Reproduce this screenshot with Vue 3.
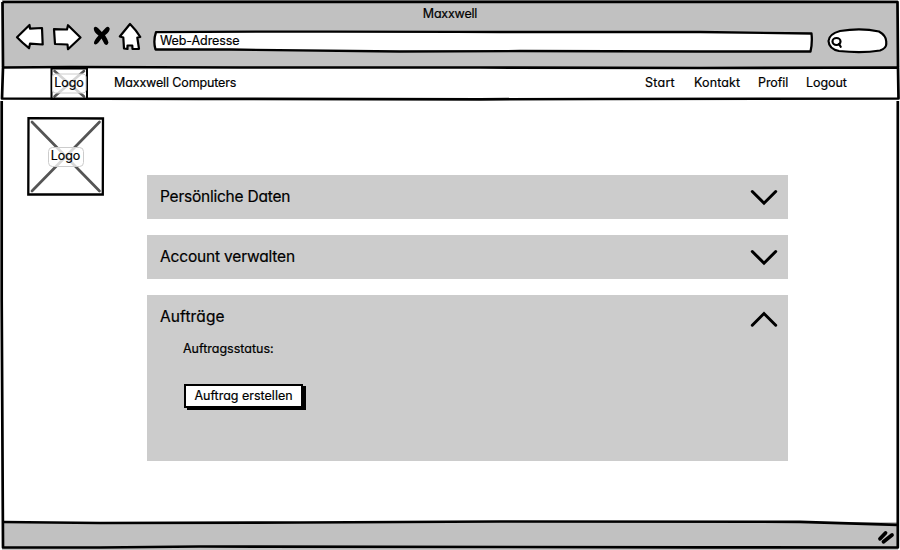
<script setup>
import { ref } from 'vue'

const links = [
  { label: 'Start', cls: 'start' },
  { label: 'Kontakt', cls: 'kontakt' },
  { label: 'Profil', cls: 'profil' },
  { label: 'Logout', cls: 'logout' },
]
const sections = ref([
  { title: 'Persönliche Daten', cls: 'personal', open: false },
  { title: 'Account verwalten', cls: 'account', open: false },
  { title: 'Aufträge', cls: 'orders', open: true },
])
</script>

<template>
  <div class="window">
    <header class="chrome">
      <div class="window-title"><span>Maxxwell</span></div>
      <div class="toolbar">
        <svg class="controls" width="130" height="32" viewBox="14 21 130 32">
          <g fill="#fff" stroke="#000" stroke-width="2.2" stroke-linejoin="round" stroke-linecap="round">
            <path d="M17 37.2L29.5 25L30 28.7L42 28L42.7 44.5L30 43.7L29 48.2Q22 42.500 17 37.200Z" />
            <path d="M54 29.200L67 29.500L68 25.200L80.500 37.500L68 49.200L67.500 44.500L55 44Z" />
            <path d="M130 24L119.800 36.500L123.300 37.500L124 48.500L127.500 49L127.500 45.500L132.300 45.500L132.500 49L139 48.800L137.300 37.500L140.300 37Q136 30 130 24Z" />
          </g>
          <path d="M93.800 28Q95.500 25.500 98.500 28.500L101.800 32L105.500 28Q108.500 25.500 109.700 28.500Q110 31.500 105 35.300Q107.500 39 108.500 42.500Q107.500 46.500 104.500 44L101.500 38.500L98.500 42.500Q95.500 46 94 43.500Q93.500 41 98.500 35.500Q93.500 32 93.800 28Z" />
        </svg>
        <div class="address">
          <svg width="660" height="24" viewBox="153 29 660 24">
            <path d="M156 32.200Q300 31 500 32L700 32L811.500 33.500Q812.500 43 810.500 51.500L700 51.500L520 51L400 51.500L230 49.500L155.500 49.500Q153 41 156 32.200Z" fill="#fff" stroke="#000" stroke-width="2.300" stroke-linejoin="round" />
          </svg>
          <span>Web-Adresse</span>
        </div>
        <svg class="search" width="62" height="28" viewBox="826 27 62 28">
          <path d="M840 31Q861 27.500 879 31.500Q887 36 886.200 43Q887 48 880 50.500Q862 53.500 839 51Q829 49 828.500 41Q829 34 840 31Z" fill="#fff" stroke="#000" stroke-width="2.200" />
          <ellipse cx="836.500" cy="41.500" rx="4" ry="3.500" fill="none" stroke="#000" stroke-width="2.200" />
          <path d="M839 44L840.700 46.800" stroke="#000" stroke-width="2.200" stroke-linecap="round" />
        </svg>
      </div>
    </header>

    <nav class="navbar">
      <div class="logo logo-small">
        <svg width="38" height="34" viewBox="50 67 38 34">
          <path d="M51.500 68.500H87V99H51.500Z" fill="#fff" stroke="#000" stroke-width="2" />
          <path d="M54.500 71L84 96.500M84 71L54.500 96.500" stroke="#555" stroke-width="2.600" stroke-linecap="round" />
          <rect x="52.500" y="74" width="33.500" height="19" rx="3" fill="#fff" fill-opacity=".75" stroke="#ccc" />
        </svg>
        <span>Logo</span>
      </div>
      <span class="brand">Maxxwell Computers</span>
      <div class="links">
        <a v-for="link in links" :key="link.label" :class="link.cls">{{ link.label }}</a>
      </div>
    </nav>

    <main class="content">
      <div class="logo logo-large">
        <svg width="78" height="80" viewBox="27 117 78 80">
          <path d="M28.500 118.200L103 118.500L102.800 194.500L28.300 194.500Z" fill="#fff" stroke="#000" stroke-width="2.300" />
          <path d="M32 122L99.500 191M99.500 122L32 191" stroke="#555" stroke-width="2.700" stroke-linecap="round" />
          <rect x="48.500" y="147.500" width="35" height="19" rx="4" fill="#fff" fill-opacity=".78" stroke="#ccc" />
        </svg>
        <span>Logo</span>
      </div>

      <div class="accordion">
        <section v-for="s in sections" :key="s.title" class="panel" :class="{ open: s.open }">
          <div class="panel-head" @click="s.open = !s.open">
            <h2 :class="s.cls">{{ s.title }}</h2>
            <svg class="chevron" width="28" height="18" viewBox="0 0 28 18">
              <path :d="s.open ? 'M2.300 15.200L14 3.500L25.700 15.200' : 'M2.300 2.500L14 14.200L25.700 2.500'" fill="none" stroke="#000" stroke-width="3" stroke-linecap="round" />
            </svg>
          </div>
          <div v-if="s.open" class="panel-body">
            <p><span class="status">Auftragsstatus:</span></p>
            <button class="create"><span>Auftrag erstellen</span></button>
          </div>
        </section>
      </div>
    </main>

    <footer class="statusbar">
      <svg width="18" height="16" viewBox="877 530 18 16">
        <path d="M880 538.800L885.500 533M883.500 541.800L892 535" stroke="#000" stroke-width="3.800" stroke-linecap="round" />
      </svg>
    </footer>

    <svg class="frame" width="900" height="550" viewBox="0 0 900 550">
      <g fill="none" stroke="#000" stroke-width="2.700" stroke-linejoin="round">
        <path d="M2.500 2L450 1.800L897.500 2L898 67" />
        <path d="M2.500 2L3 67M1.700 101V300L3 547.500L100 547.500L200 546.500L700 547.300L897.800 547.500L897.800 300V101" />
        <path d="M3 67.500L70 67L240 67.500L480 67.500L700 68L898 67.500L898.500 98.500L600 99L480 99.300L200 98.800L2 98.500Z" />
        <path d="M3 522L100 523L300 522.500L500 521.500L800 521.800L897 524.800" />
      </g>
    </svg>
  </div>
</template>

<style>
body {
  margin: 0;
  background: #fff;
}
</style>

<style scoped>
.window {
  position: relative;
  display: flex;
  flex-direction: column;
  width: 900px;
  height: 550px;
  overflow: hidden;
  background: #fff;
  color: #000;
  font-family: Inter, "Open Sans", sans-serif;
  font-feature-settings: "cv11";
  -webkit-text-stroke: 0.2px #000;
  font-size: 12.5px;
  line-height: 16px;
}
.frame {
  position: absolute;
  inset: 0;
  pointer-events: none;
}
.chrome {
  box-sizing: border-box;
  height: 67px;
  margin: 0 2px;
  padding-top: 6px;
  background: #c1c1c1;
}
.window-title {
  text-align: center;
  height: 15px;
  letter-spacing: -0.2px;
}
.toolbar {
  display: flex;
  align-items: flex-start;
  padding-left: 12px;
}
.controls {
  display: block;
}
.address {
  display: grid;
  align-items: center;
  margin: 8px 0 0 9px;
}
.address > *,
.logo > * {
  grid-area: 1 / 1;
  display: block;
}
.address > span {
  padding-left: 7px;
  letter-spacing: -0.1px;
}
.search {
  margin: 6px 0 0 13px;
}
.navbar {
  display: flex;
  align-items: center;
  height: 34px;
  padding-left: 50px;
}
.logo {
  display: grid;
  place-items: center;
}
.logo-small > span {
  padding-bottom: 2px;
}
.logo-large {
  align-self: flex-start;
  margin: 16px 0 0 27px;
}
.logo-large > span {
  padding-right: 1px;
  padding-bottom: 2px;
}
.brand {
  width: 531px;
  padding: 0 0 2px 26px;
  box-sizing: border-box;
  margin-right: 26px;
  letter-spacing: -0.13px;
}
.links {
  display: flex;
  padding-bottom: 2px;
}
.links a {
  white-space: nowrap;
}
.start { width: 49px; letter-spacing: 0.25px; }
.kontakt { width: 64px; letter-spacing: 0.12px; }
.profil { width: 48px; letter-spacing: -0.1px; }
.logout { width: 42px; letter-spacing: -0.05px; }
.content {
  flex: 1;
  display: flex;
}
.accordion {
  display: flex;
  flex-direction: column;
  gap: 16px;
  width: 641px;
  margin: 74px 0 0 42px;
}
.panel {
  height: 44px;
  background: #ccc;
}
.panel.open {
  height: 166px;
}
.panel-head {
  display: flex;
  justify-content: space-between;
  align-items: center;
  height: 44px;
  padding: 0 10px 0 13px;
}
h2 {
  margin: 0;
  font-size: 15.5px;
  font-weight: 400;
  line-height: 20px;
}
.personal { letter-spacing: -0.23px; }
.account { letter-spacing: -0.17px; }
.orders { letter-spacing: 0.12px; }
.chevron {
  margin-top: 1px;
}
.open .chevron {
  margin-top: 4px;
}
.panel-body {
  padding-left: 37px;
}
p {
  margin: 2px 0 27px -1px;
  height: 16px;
}
.create {
  display: block;
  box-sizing: border-box;
  width: 119px;
  height: 24px;
  padding: 0;
  border: 2px solid #000;
  background: #fff;
  box-shadow: 3px 2px 0 #000;
  color: #000;
  font: inherit;
  font-feature-settings: inherit;
  white-space: nowrap;
}
.statusbar {
  box-sizing: border-box;
  display: flex;
  justify-content: flex-end;
  height: 28px;
  margin: 0 2px;
  padding: 8px 3px 0 0;
  background: #c1c1c1;
}
</style>
